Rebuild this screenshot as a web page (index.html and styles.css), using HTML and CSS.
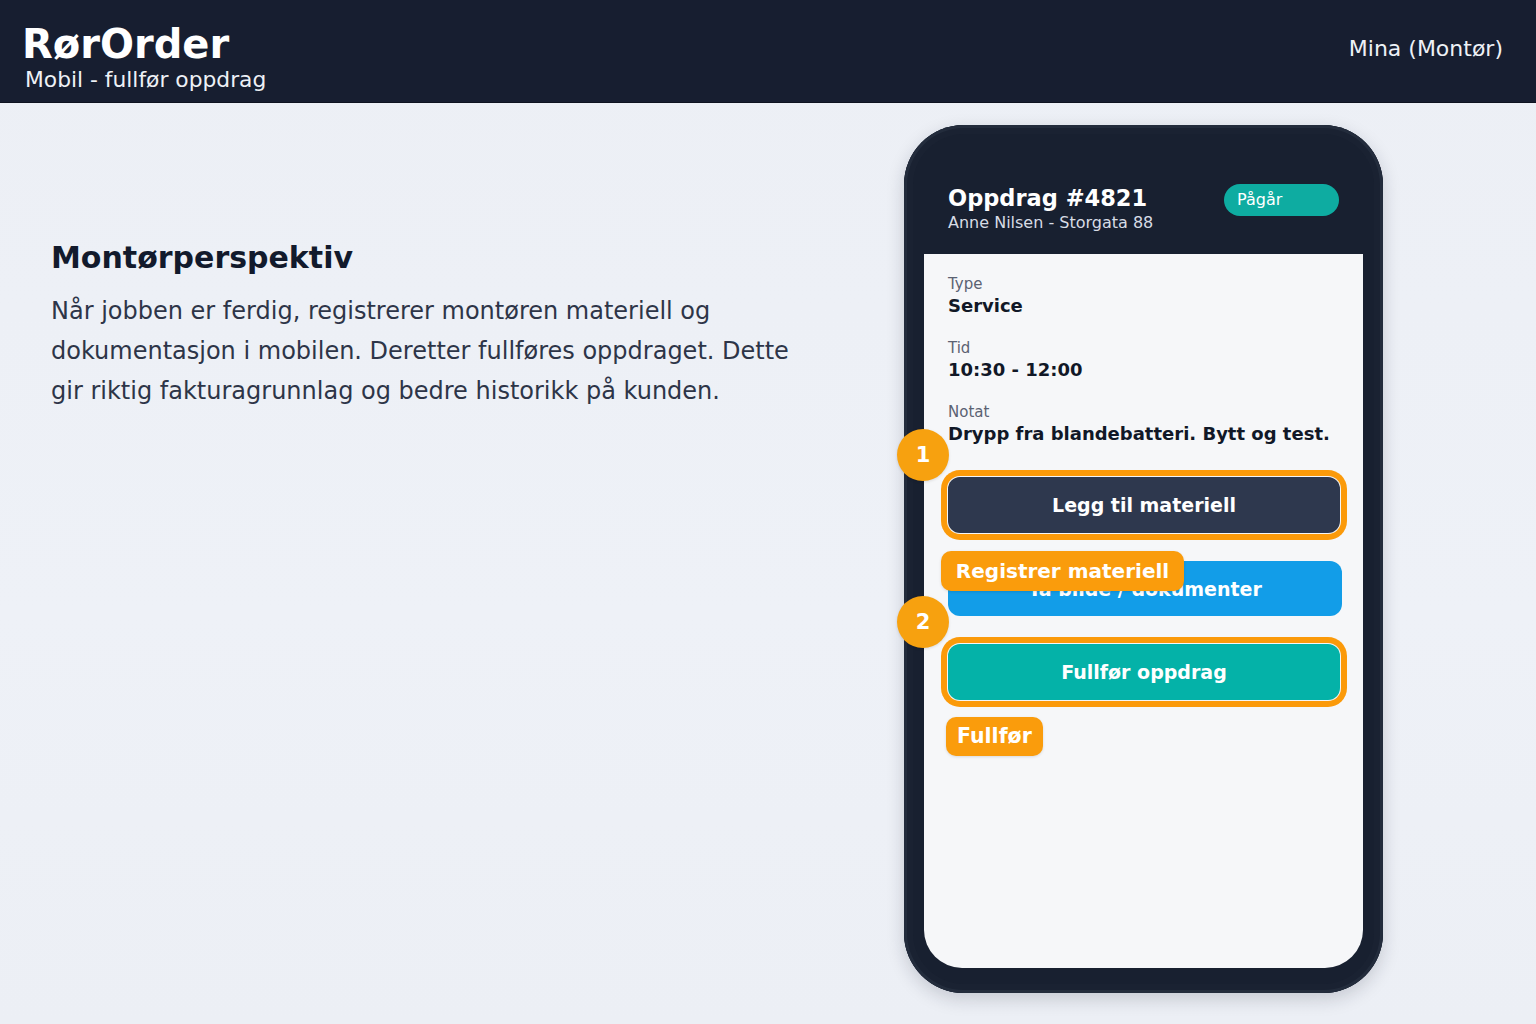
FILE: index.html
```html
<!DOCTYPE html>
<html lang="no">
<head>
<meta charset="utf-8">
<title>RørOrder - Mobil</title>
<link rel="stylesheet" href="styles.css">
</head>
<body>
<header class="topbar">
  <div class="brand">
    <div class="brand-title">RørOrder</div>
    <div class="brand-sub">Mobil - fullfør oppdrag</div>
  </div>
  <div class="user">Mina (Montør)</div>
</header>
<main class="main">
  <section class="intro">
    <h1 class="intro-title">Montørperspektiv</h1>
    <p class="intro-text">Når jobben er ferdig, registrerer montøren materiell og dokumentasjon i mobilen. Deretter fullføres oppdraget. Dette gir riktig fakturagrunnlag og bedre historikk på kunden.</p>
  </section>
  <div class="phone">
    <div class="phone-head">
      <div class="job">
        <div class="job-title">Oppdrag #4821</div>
        <div class="job-sub">Anne Nilsen - Storgata 88</div>
      </div>
      <div class="pill">Pågår</div>
    </div>
    <div class="screen">
      <div class="field">
        <div class="field-label">Type</div>
        <div class="field-value">Service</div>
      </div>
      <div class="field">
        <div class="field-label">Tid</div>
        <div class="field-value">10:30 - 12:00</div>
      </div>
      <div class="field last">
        <div class="field-label">Notat</div>
        <div class="field-value">Drypp fra blandebatteri. Bytt og test.</div>
      </div>
      <div class="btn-wrap first">
        <span class="step">1</span>
        <div class="btn btn-dark highlighted">Legg til materiell</div>
      </div>
      <div class="btn-wrap">
        <div class="btn btn-blue">Ta bilde / dokumenter</div>
        <span class="tag tag-over">Registrer materiell</span>
      </div>
      <div class="btn-wrap">
        <span class="step">2</span>
        <div class="btn btn-teal highlighted">Fullfør oppdrag</div>
      </div>
      <span class="tag tag-flow">Fullfør</span>
    </div>
  </div>
</main>
</body>
</html>
```
FILE: styles.css
```css
* { box-sizing: border-box; }
html, body { margin: 0; padding: 0; }
body {
  font-family: "DejaVu Sans", Verdana, sans-serif;
  background: linear-gradient(180deg, #eceff5 0%, #eef1f7 60%, #eceff5 100%);
  width: 1536px;
  height: 1024px;
  overflow: hidden;
  color: #111827;
}
.topbar {
  height: 103px;
  background: #171e30;
  display: flex;
  justify-content: space-between;
  align-items: flex-start;
  padding: 0 33px 0 22px;
  border-bottom: 1px solid #0e1320;
}
.brand-title {
  color: #ffffff;
  font-weight: bold;
  font-size: 40px;
  line-height: 46px;
  margin-top: 21px;
}
.brand-sub {
  color: #eef1f6;
  font-size: 21.8px;
  line-height: 26px;
  margin-left: 3px;
}
.user {
  color: #eef1f6;
  font-size: 22px;
  line-height: 26px;
  margin-top: 36px;
}
.main {
  display: flex;
  align-items: flex-start;
  padding: 22px 0 0 51px;
}
.intro {
  width: 853px;
  padding-top: 115px;
}
.intro-title {
  margin: 0;
  font-size: 30px;
  line-height: 36px;
  font-weight: bold;
  color: #121a2c;
}
.intro-text {
  margin: 15px 0 0;
  width: 760px;
  font-size: 24px;
  line-height: 40px;
  color: #2d3548;
}
.phone {
  width: 479px;
  height: 868px;
  border-radius: 60px;
  background: #182030;
  padding: 0 20px 25px;
  display: flex;
  flex-direction: column;
  box-shadow: inset 0 0 0 3px #232c3c, inset 0 0 0 9px #1a2232, 0 6px 18px rgba(20, 30, 50, 0.18);
}
.phone-head {
  height: 129px;
  flex: none;
  display: flex;
  justify-content: space-between;
  align-items: flex-start;
  padding: 59px 24px 0 24px;
}
.job-title {
  color: #ffffff;
  font-weight: bold;
  font-size: 22.5px;
  line-height: 28px;
}
.job-sub {
  color: #d7dce5;
  font-size: 16px;
  line-height: 22px;
}
.pill {
  width: 115px;
  height: 32px;
  border-radius: 16px;
  background: #0eaca1;
  color: #ffffff;
  font-size: 16px;
  line-height: 32px;
  padding-left: 13px;
}
.screen {
  flex: 1;
  background: #f6f7f9;
  border-radius: 0 0 38px 38px;
  padding: 21px 23px 0 24px;
  display: flex;
  flex-direction: column;
  align-items: flex-start;
}
.field { margin-bottom: 20px; }
.field.last { margin-bottom: 0; }
.field-label {
  font-size: 15px;
  line-height: 18px;
  color: #5b6272;
}
.field-value {
  font-size: 18px;
  line-height: 26px;
  font-weight: bold;
  color: #111827;
}
.btn-wrap {
  position: relative;
  width: 100%;
  margin-top: 28px;
}
.btn-wrap.first { margin-top: 30px; }
.btn {
  height: 56px;
  border-radius: 12px;
  color: #ffffff;
  font-weight: bold;
  font-size: 19px;
  display: flex;
  align-items: center;
  justify-content: center;
}
.btn-dark { background: #2e384e; width: 392px; }
.btn-blue { background: #129de8; width: 394px; height: 55px; }
.btn-teal { background: #04b2a8; width: 392px; }
.highlighted {
  box-shadow: 0 0 0 1px #f4f6f8, 0 0 0 7px #fb9a0a;
}
.step {
  position: absolute;
  left: -51px;
  top: -48px;
  width: 52px;
  height: 52px;
  border-radius: 50%;
  background: #f7a10f;
  color: #ffffff;
  font-weight: bold;
  font-size: 21px;
  line-height: 52px;
  text-align: center;
  box-shadow: 0 1px 3px rgba(0, 0, 0, 0.12);
}
.tag {
  background: #fa9c0c;
  color: #ffffff;
  font-weight: bold;
  border-radius: 10px;
  box-shadow: 0 1px 3px rgba(0, 0, 0, 0.12);
}
.tag-over {
  position: absolute;
  left: -7px;
  top: -10px;
  height: 40px;
  width: 243px;
  font-size: 20px;
  line-height: 40px;
  text-align: center;
}
.tag-flow {
  margin-top: 17px;
  margin-left: -2px;
  height: 39px;
  padding: 0 11px;
  font-size: 20.5px;
  line-height: 39px;
}
```
